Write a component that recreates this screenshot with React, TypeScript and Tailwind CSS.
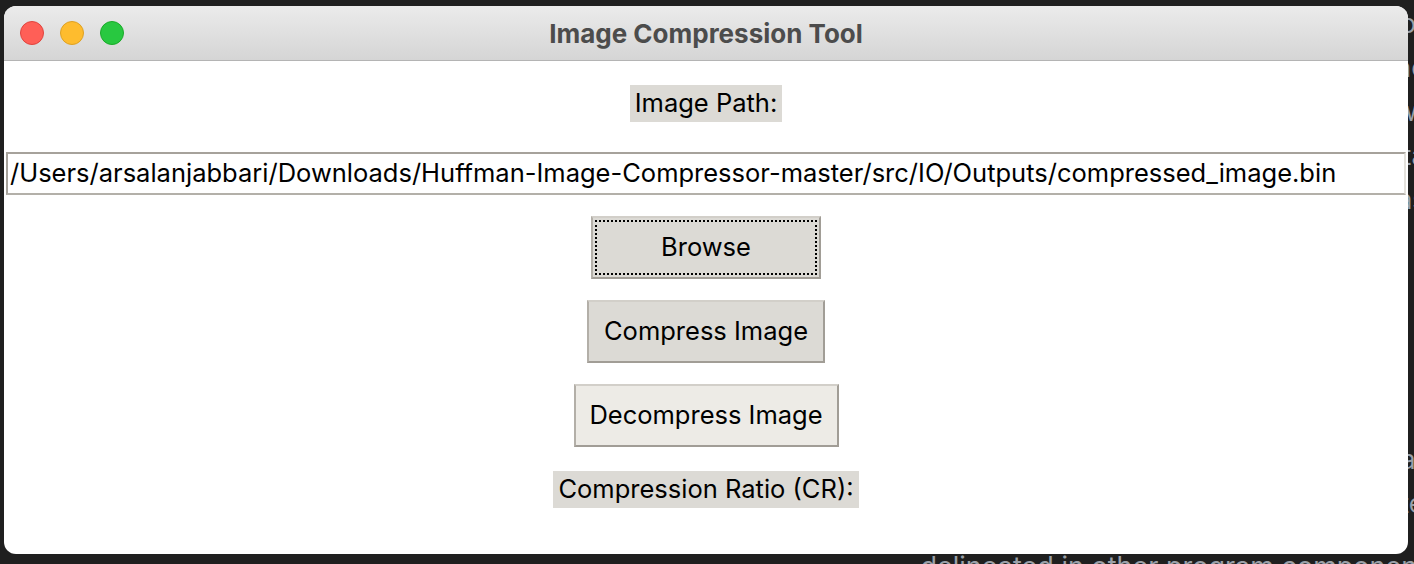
const font = { fontFamily: "Inter, 'Liberation Sans', sans-serif" };

function TrafficLights() {
  return (
    <div className="flex items-center gap-[16px] pl-[16px]">
      <span className="block h-[24px] w-[24px] rounded-full border border-[#e0443e] bg-[#ff5f57]" />
      <span className="block h-[24px] w-[24px] rounded-full border border-[#dea123] bg-[#febc2e]" />
      <span className="block h-[24px] w-[24px] rounded-full border border-[#1aab29] bg-[#28c840]" />
    </div>
  );
}

function TkButton({
  label,
  width,
  focused,
  light,
}: {
  label: string;
  width: string;
  focused?: boolean;
  light?: boolean;
}) {
  return (
    <button
      className={`${width} h-[63px] border-2 border-t-[#d2cfc9] border-l-[#b3afa8] border-b-[#a19d96] border-r-[#a19d96] p-[2px] text-[25.5px] text-black ${
        light ? "bg-[#edebe6]" : "bg-[#dcdad5]"
      }`}
    >
      <div
        className={`flex h-full w-full items-center justify-center ${
          focused ? "border-2 border-dotted border-black" : ""
        }`}
      >
        {label}
      </div>
    </button>
  );
}

export default function App() {
  return (
    <div
      className="relative h-[564px] w-[1414px] overflow-hidden bg-[#1f1f1f] text-[26px] text-[#9aa0a8]"
      style={font}
    >
      <div className="absolute right-[-12px] top-[2px] flex flex-col items-end leading-[44px]">
        <span>or</span>
        <span>nc</span>
        <span>ow</span>
        <span>ta</span>
        <span>as</span>
      </div>
      <div className="absolute right-[-10px] top-[438px] flex flex-col items-end leading-[44px]">
        <span>at</span>
        <span>te</span>
      </div>
      <div className="absolute bottom-[-23px] right-[-12px] whitespace-nowrap text-[27px]">
        delineated in other program component
      </div>

      <div className="relative ml-[4px] mt-[6px] flex h-[548px] w-[1404px] flex-col overflow-hidden rounded-[12px] bg-white">
        <div className="relative flex h-[55px] shrink-0 items-center border-b border-[#b4b4b4] bg-gradient-to-b from-[#ebebeb] to-[#d5d5d5]">
          <TrafficLights />
          <div className="absolute inset-0 flex items-center justify-center text-[26px] font-bold text-[#4c4c4c]">
            Image Compression Tool
          </div>
        </div>

        <div className="flex flex-col items-center text-[25.5px] text-black">
          <div className="mt-[24px] flex h-[37px] items-center bg-[#dcdad5] px-[5px]">Image Path:</div>
          <div className="mt-[30px] flex h-[43px] w-[1400px] items-center border-2 border-t-[#a6a29b] border-l-[#a6a29b] border-b-[#b3b0a9] border-r-[#e3e1dc] bg-white pl-[2px]">
            /Users/arsalanjabbari/Downloads/Huffman-Image-Compressor-master/src/IO/Outputs/compressed_image.bin
          </div>
          <div className="mt-[21px]">
            <TkButton label="Browse" width="w-[230px]" focused />
          </div>
          <div className="mt-[21px]">
            <TkButton label="Compress Image" width="w-[238px]" />
          </div>
          <div className="mt-[21px]">
            <TkButton label="Decompress Image" width="w-[265px]" light />
          </div>
          <div className="mt-[24px] flex h-[37px] items-center bg-[#dcdad5] px-[5px]">Compression Ratio (CR):</div>
        </div>
      </div>
    </div>
  );
}
